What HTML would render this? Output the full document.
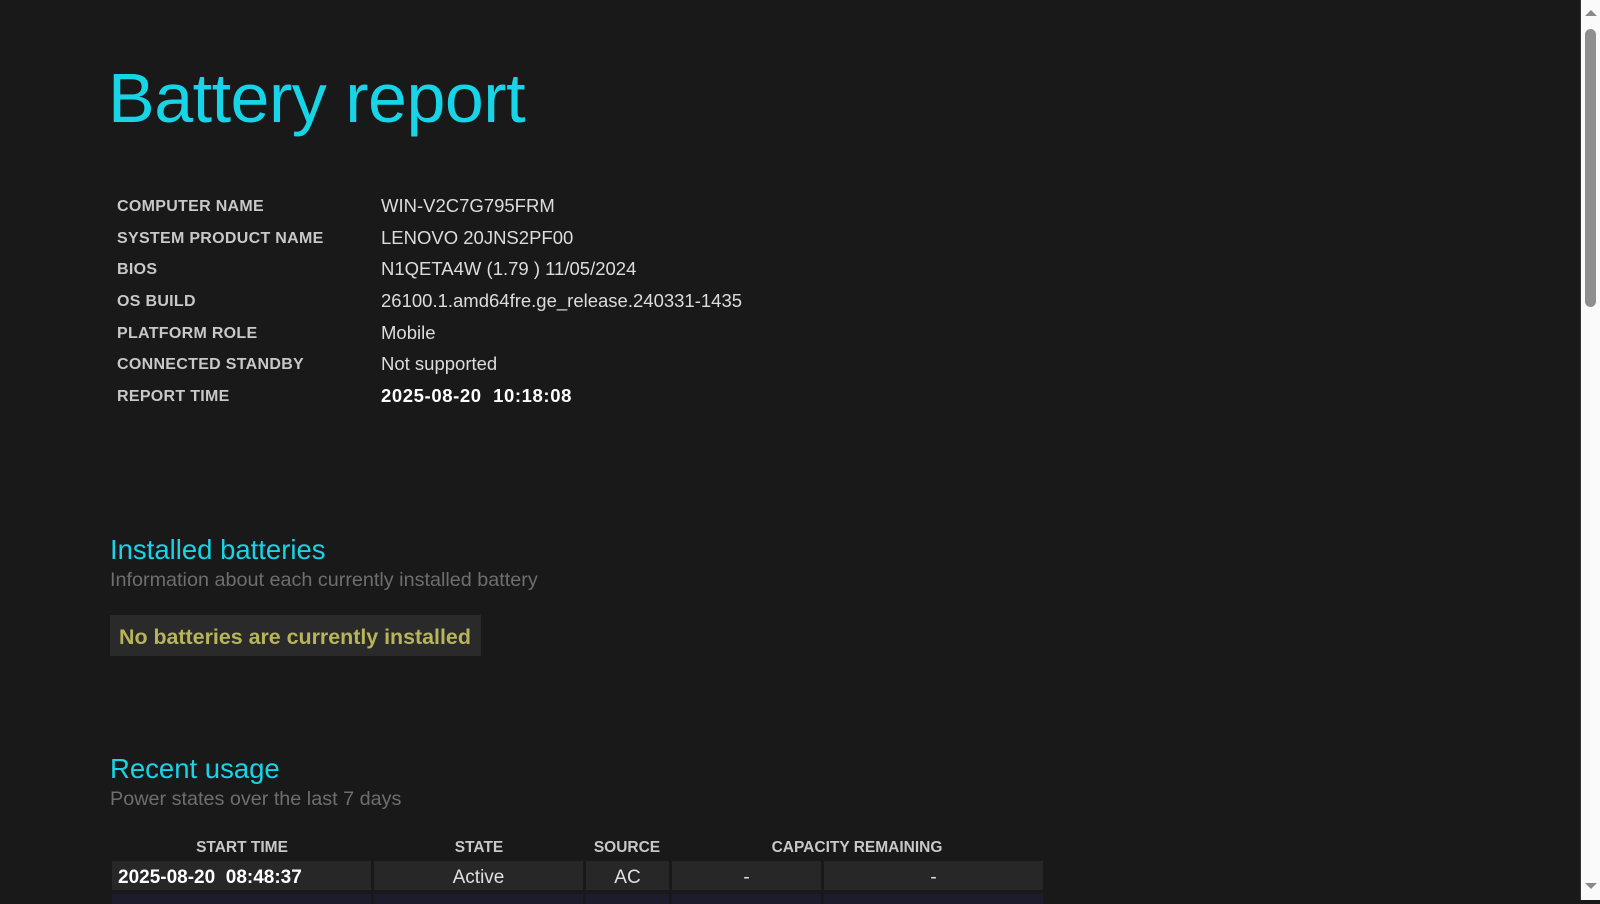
<!DOCTYPE html>
<html><head><meta charset="utf-8"><style>
*{margin:0;padding:0;box-sizing:border-box}
html,body{width:1600px;height:900px;overflow:hidden;background:#191919;font-family:"Liberation Sans",sans-serif}
.a{position:absolute;white-space:nowrap;line-height:1}
.t{left:108px;top:63px;font-size:70px;color:#17d4e6;letter-spacing:-0.5px}
.l{left:117px;font-size:16px;color:#c8c8c8;font-weight:bold;letter-spacing:0.3px}
.v{left:381px;font-size:18.5px;color:#dcdcdc}
.h{left:110px;font-size:27.5px;color:#17d4e6}
.s{left:110px;font-size:19.8px;color:#6e6e6e}
.box{position:absolute;left:110px;top:615px;width:371px;height:41px;background:#2a2a2a;color:#b8b45c;font-weight:bold;font-size:21.4px;padding:10px 0 0 9px;white-space:nowrap}
.th{font-size:15.5px;color:#c8c8c8;font-weight:bold;transform:translateX(-50%)}
.c{position:absolute;top:861px;height:29px;background:#272727;color:#e0e0e0;font-size:19px;text-align:center;padding-top:6px}
.r2{position:absolute;top:894px;height:10px;background:#1c1c2c}
</style></head><body>
<div class="a t">Battery report</div>

<div class="a l" style="top:199px">COMPUTER NAME</div><div class="a v" style="top:197px">WIN-V2C7G795FRM</div>
<div class="a l" style="top:231px">SYSTEM PRODUCT NAME</div><div class="a v" style="top:229px">LENOVO 20JNS2PF00</div>
<div class="a l" style="top:262px">BIOS</div><div class="a v" style="top:260px">N1QETA4W (1.79 ) 11/05/2024</div>
<div class="a l" style="top:294px">OS BUILD</div><div class="a v" style="top:292px">26100.1.amd64fre.ge_release.240331-1435</div>
<div class="a l" style="top:326px">PLATFORM ROLE</div><div class="a v" style="top:324px">Mobile</div>
<div class="a l" style="top:357px">CONNECTED STANDBY</div><div class="a v" style="top:355px">Not supported</div>
<div class="a l" style="top:389px">REPORT TIME</div><div class="a v" style="top:387px;color:#fff;font-weight:bold;letter-spacing:0.6px">2025-08-20&nbsp; 10:18:08</div>

<div class="a h" style="top:536px">Installed batteries</div>
<div class="a s" style="top:571px">Information about each currently installed battery</div>
<div class="box">No batteries are currently installed</div>

<div class="a h" style="top:755px">Recent usage</div>
<div class="a s" style="top:790px">Power states over the last 7 days</div>

<div class="a th" style="left:242px;top:840px">START TIME</div>
<div class="a th" style="left:479px;top:840px">STATE</div>
<div class="a th" style="left:627px;top:840px">SOURCE</div>
<div class="a th" style="left:857px;top:840px">CAPACITY REMAINING</div>

<div class="c" style="left:112px;width:259px;text-align:left;padding-left:6px;color:#fff;font-weight:bold">2025-08-20&nbsp; 08:48:37</div>
<div class="c" style="left:374px;width:209px">Active</div>
<div class="c" style="left:586px;width:83px">AC</div>
<div class="c" style="left:672px;width:149px">-</div>
<div class="c" style="left:824px;width:219px">-</div>
<div class="r2" style="left:112px;width:259px"></div>
<div class="r2" style="left:374px;width:209px"></div>
<div class="r2" style="left:586px;width:83px"></div>
<div class="r2" style="left:672px;width:149px"></div>
<div class="r2" style="left:824px;width:219px"></div>

<div style="position:absolute;left:1580px;top:0;width:20px;height:900px;background:#fafafa;border-left:1px solid #333"></div>
<div style="position:absolute;left:1585px;top:29px;width:11px;height:278px;background:#8f8f8f;border-radius:6px"></div>
<svg style="position:absolute;left:1584px;top:9px" width="14" height="8"><polygon points="1,7 7,1 13,7" fill="#8a8a8a"/></svg>
<svg style="position:absolute;left:1584px;top:882px" width="14" height="8"><polygon points="1,1 13,1 7,7" fill="#8a8a8a"/></svg>
</body></html>
